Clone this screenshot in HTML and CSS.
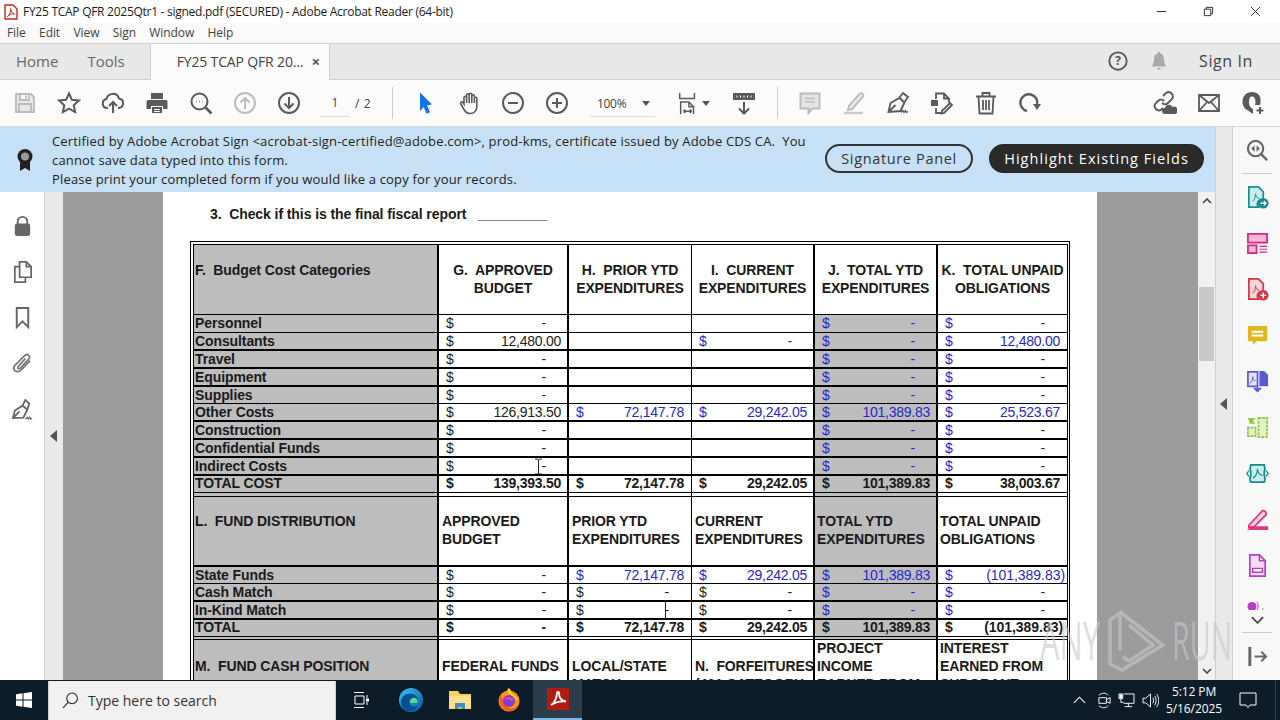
FILE: index.html
```html
<!DOCTYPE html>
<html lang="en">
<head>
<meta charset="utf-8">
<title>FY25 TCAP QFR 2025Qtr1 - signed.pdf</title>
<link rel="stylesheet" href="styles.css">
</head>
<body>
<div class="app">
  <header class="titlebar">
    <svg class="ti" viewBox="0 0 14 16"><path d="M1 1h8l4 4v10H1z" fill="#fff" stroke="#c8281e" stroke-width="1.4"/><path d="M3.5 12.5c2-1 3.500-5 3-8 .5 3 2 5 4 5.500-3 -.5-5 .5-7 2.500z" fill="none" stroke="#c8281e" stroke-width="1"/></svg>
    <span class="ttext">FY25 TCAP QFR 2025Qtr1 - signed.pdf (SECURED) - Adobe Acrobat Reader (64-bit)</span>
    <div class="winbtns">
      <svg viewBox="0 0 12 12"><path d="M1 6h10" stroke="#222" stroke-width="1"/></svg>
      <svg viewBox="0 0 12 12"><path d="M1.500 3.500h7v7h-7zM3.500 3.500v-2h7v7h-2" fill="none" stroke="#222" stroke-width="1"/></svg>
      <svg viewBox="0 0 12 12"><path d="M1 1l10 10M11 1L1 11" stroke="#222" stroke-width="1"/></svg>
    </div>
  </header>
  <nav class="menubar">
    <span>File</span><span>Edit</span><span>View</span><span>Sign</span><span>Window</span><span>Help</span>
  </nav>
  <div class="tabbar">
    <span class="tablink">Home</span>
    <span class="tablink tools">Tools</span>
    <div class="tab"><span>FY25 TCAP QFR 20...</span><b>×</b></div>
    <div class="tabright">
      <svg class="i22" viewBox="0 0 24 24"><circle cx="12" cy="12" r="9.500" fill="none" stroke="#555" stroke-width="2"/><text x="12" y="16.500" class="qm">?</text></svg>
      <svg class="i22 bell" viewBox="0 0 24 24"><path d="M12 2c1 0 1.500 .8 1.500 1.600 3 1 4 3.500 4 6.400 0 4 1 6 2.500 8H4c1.500-2 2.500-4 2.500-8 0-2.900 1-5.400 4-6.400C10.500 2.800 11 2 12 2zM10 19.500h4a2 2 0 0 1-4 0z" fill="#aaa"/></svg>
      <span class="signin">Sign In</span>
    </div>
  </div>
  <div class="toolbar">
    <button class="tb"><svg viewBox="0 0 24 24" class="off"><path d="M3 3h15l3 3v15H3zM7 3v6h9V3M6 21v-8h12v8M13 4.500v3" fill="#e8e8e8" stroke="#bbb" stroke-width="1.800"/></svg></button>
    <button class="tb"><svg viewBox="0 0 24 24"><path d="M12 2.500l2.900 6.300 6.900.8-5.100 4.700 1.400 6.800-6.100-3.400-6.100 3.400 1.400-6.800-5.100-4.700 6.900-.8z"/></svg></button>
    <button class="tb"><svg viewBox="0 0 24 24"><path d="M7 17H6a4.500 4.500 0 0 1-.6-8.900A6.500 6.500 0 0 1 18 7.500a4.800 4.800 0 0 1 0 9.500h-1M12 22V11M8 15l4-4 4 4"/></svg></button>
    <button class="tb"><svg viewBox="0 0 24 24"><path class="fill" d="M6 2h12v6H6zM3 9h18a1.500 1.500 0 0 1 1.500 1.500V18H18v-3H6v3H1.500v-7.500A1.500 1.500 0 0 1 3 9zM7 16h10v6H7z"/><path d="M9 18.500h6M9 20.500h6" stroke="#fff" stroke-width="1"/></svg></button>
    <button class="tb"><svg viewBox="0 0 24 24"><circle cx="10.500" cy="10.500" r="8"/><path d="M16.500 16.500l6 6" stroke-width="2.600"/><path d="M7 10.500h.5M10.300 10.500h.5M13.600 10.500h.5" stroke-width="1.800"/></svg></button>
    <button class="tb"><svg viewBox="0 0 24 24" class="off"><circle cx="12" cy="12" r="10"/><path d="M12 18V7M7.500 11.500L12 7l4.500 4.500"/></svg></button>
    <button class="tb"><svg viewBox="0 0 24 24"><circle cx="12" cy="12" r="10"/><path d="M12 6v11M7.500 12.500L12 17l4.500-4.500"/></svg></button>
    <div class="pager"><span class="pnum">1</span><span class="ptotal">/ 2</span></div>
    <button class="tb"><svg viewBox="0 0 24 24"><path d="M7 1.500l12 12-5 .8 3 7-3.500 1.500-2.800-6.800L7 20z" fill="#1473e6" stroke="none"/></svg></button>
    <button class="tb"><svg viewBox="0 0 24 24"><path d="M7 13V6.500a1.300 1.300 0 0 1 2.600 0V4a1.300 1.300 0 0 1 2.600 0v-.5a1.300 1.300 0 0 1 2.600 0V5a1.300 1.300 0 0 1 2.600 0v2a1.300 1.300 0 0 1 2.400 0v9c0 4-3 6.500-6.500 6.500-3 0-4.500-1-6-3.500l-3.500-6c-.8-1.500 1-2.800 2.200-1.500zM9.600 6.500V12M12.200 4v8M14.800 4v8M17.400 6v6" stroke-width="1.600"/></svg></button>
    <button class="tb"><svg viewBox="0 0 24 24"><circle cx="12" cy="12" r="10"/><path d="M7 12h10"/></svg></button>
    <button class="tb"><svg viewBox="0 0 24 24"><circle cx="12" cy="12" r="10"/><path d="M7 12h10M12 7v10"/></svg></button>
    <div class="zoomsel"><span>100%</span><i class="caret"></i></div>
    <button class="tb fitb"><svg viewBox="0 0 24 24"><path d="M3 1v6h16V1M4 24V11h9l5 5v8M13 11v5h5M7 21h9M7 21l2-2M7 21l2 2M16 21l-2-2M16 21l-2 2" stroke-width="1.600"/></svg><i class="caret"></i></button>
    <button class="tb readb"><svg viewBox="0 0 24 24"><path class="fill" d="M1 2h22v7H1z"/><path d="M4.500 5.500h1M8 5.500h1M11.500 5.500h1M15 5.500h1M18.500 5.500h1" stroke="#fff" stroke-width="2"/><path d="M12 11v11M7 17.500l5 5 5-5" stroke-width="2"/></svg></button>
    <span class="tsep"></span>
    <button class="tb"><svg viewBox="0 0 24 24" class="off"><path d="M2.500 2.500h19v15h-7l-4 4.500v-4.500h-8z" fill="#e4e4e4"/><path d="M7 7.500h10M7 11h10"  stroke-width="1.500"/></svg></button>
    <button class="tb"><svg viewBox="0 0 24 24" class="off"><path d="M7 15L18 2.500c2-1 4 1 3 3L10 18l-4 1z" fill="#f0f0f0"/><path d="M2 22h19" stroke-width="2.500" stroke="#ccc"/></svg></button>
    <button class="tb"><svg viewBox="0 0 24 24"><path d="M2.500 21l2-9 9-5 5 4.500-4 8.500zM2.500 21l7-7M13 7l4-5 5 4-3.500 5" stroke-width="1.900"/><path d="M15 21.500l2-2 1 2 1.500-2 1 2 1.500-1" stroke-width="1.200"/></svg></button>
    <button class="tb"><svg viewBox="0 0 24 24"><path d="M6 8V2.500h8l5 5V12M14 2.500v5h5M6 17v5h5M14 22l8-8-2-2-8 8-.5 2.500z" stroke-width="1.800"/><path class="fill" d="M1 9h7v6H1z"/></svg></button>
    <button class="tb"><svg viewBox="0 0 24 24"><path d="M2 5.500h20M8.500 5.500V2h7v3.500M4.500 5.500l1 17h13l1-17M9 9v10M12 9v10M15 9v10" stroke-width="1.800"/></svg></button>
    <button class="tb"><svg viewBox="0 0 24 24"><path d="M9 20A8.500 8.500 0 1 1 19 14" stroke-width="2.400"/><path class="fill" d="M15 13h8l-4 6z"/></svg></button>
    <span class="tspace"></span>
    <button class="tb"><svg viewBox="0 0 24 24"><path d="M10 5l3-3a4.300 4.300 0 0 1 6 6l-4 4a4.300 4.300 0 0 1-6 0M11 10a4.300 4.300 0 0 0-6 0l-2.500 2.500a4.300 4.300 0 0 0 6 6l1.500-1.500" stroke-width="1.900"/><path class="fill" d="M12 23a3 3 0 0 1 0-6 4 4 0 0 1 7.500-1 3.500 3.500 0 0 1 3 7z"/></svg></button>
    <button class="tb"><svg viewBox="0 0 24 24"><path d="M2 4h20v16H2zM2 4l10 8 10-8M2 20l8-9M22 20l-8-9" stroke-width="1.800"/></svg></button>
    <button class="tb"><svg viewBox="0 0 24 24"><path class="fill" d="M11 1C5.500 1 1.500 5 1.500 10.500c0 4 2 7.500 5.500 9l5 3.500v-5c-2.500-1-4-3.500-4-7 0-3.500 1-5.500 3-5.500s3.500 2 3.500 5.500c0 1-.2 2-.5 3h5c.4-1 .5-2 .5-3.500C20.500 5 16.500 1 11 1z"/><path d="M19 16v7M15.500 19.500h7" stroke-width="2"/></svg></button>
  </div>

  <div class="workspace">
    <div class="docside">
      <section class="infobar">
        <svg class="ribbon" viewBox="0 0 18 24"><circle cx="9" cy="8.500" r="7.500" fill="#222"/><circle cx="9" cy="8.500" r="4" fill="#999"/><path d="M4 14v9l5-3 5 3v-9z" fill="#222"/></svg>
        <p class="infotext">Certified by Adobe Acrobat Sign &lt;acrobat-sign-certified@adobe.com&gt;, prod-kms, certificate issued by Adobe CDS CA.&nbsp; You<br>cannot save data typed into this form.<br>Please print your completed form if you would like a copy for your records.</p>
        <span class="pill">Signature Panel</span>
        <span class="pill dark">Highlight Existing Fields</span>
      </section>
      <div class="docrow">
        <aside class="leftrail">
          <svg viewBox="0 0 24 24"><path d="M7 11V8a5 5 0 0 1 10 0v3" fill="none" stroke="#666" stroke-width="2"/><rect x="4" y="10" width="16" height="13" rx="2.500" fill="#666"/></svg>
          <svg viewBox="0 0 24 24"><path d="M9 18V2h7l5 5v11zM16 2v5h5M9 7H4v16h11v-5" fill="none" stroke="#666" stroke-width="1.800"/></svg>
          <svg viewBox="0 0 24 24"><path d="M6 2h12v20l-6-6-6 6z" fill="none" stroke="#666" stroke-width="2"/></svg>
          <svg viewBox="0 0 24 24"><path d="M20 9l-9.500 10c-2 2-5 2-6.500 .5s-1.500-4 .5-6L14 4c1.500-1.500 3.500-1.500 4.500-.5s1 3-.5 4.500l-8 8.500c-1 1-2 1-2.500 .5s-.5-1.500 .5-2.500l7-7.500" fill="none" stroke="#777" stroke-width="1.800"/></svg>
          <svg viewBox="0 0 24 24"><path d="M2 21l2-8 8-5 5 4-4 8.500zM2 21l7-7M12 8l3-6 4 4-2 6" fill="none" stroke="#666" stroke-width="1.900"/><path d="M15 22l2-2 1 2 1.500-2 1 2 1.500-1" fill="none" stroke="#666" stroke-width="1.200"/></svg>
        </aside>
        <div class="strip"><i class="arrowl"></i></div>
        <main class="canvas">
          <article class="page">
            <p class="finalq">3.&nbsp; Check if this is the final fiscal report &nbsp; _________</p>
            <div class="sheet">
              <div class="inner">
                <div class="row h70 b1 bold">
                  <div class="c f top16">F.&nbsp; Budget Cost Categories</div>
                  <div class="c g top16 center">G.&nbsp; APPROVED<br>BUDGET</div>
                  <div class="c h top16 center">H.&nbsp; PRIOR YTD<br>EXPENDITURES</div>
                  <div class="c i top16 center">I.&nbsp; CURRENT<br>EXPENDITURES</div>
                  <div class="c j nogrey top16 center">J.&nbsp; TOTAL YTD<br>EXPENDITURES</div>
                  <div class="c k top16 center">K.&nbsp; TOTAL UNPAID<br>OBLIGATIONS</div>
                </div>
                <div class="row h18 b1">
                  <div class="c f bold">Personnel</div>
                  <div class="c g m"><span>$</span><span class="d">-</span></div>
                  <div class="c h m"></div><div class="c i m"></div>
                  <div class="c j m blue"><span>$</span><span class="d">-</span></div>
                  <div class="c k m blue"><span>$</span><span class="d">-</span></div>
                </div>
                <div class="row h18 b2">
                  <div class="c f bold">Consultants</div>
                  <div class="c g m"><span>$</span><span>12,480.00</span></div>
                  <div class="c h m"></div>
                  <div class="c i m blue"><span>$</span><span class="d">-</span></div>
                  <div class="c j m blue"><span>$</span><span class="d">-</span></div>
                  <div class="c k m blue"><span>$</span><span>12,480.00</span></div>
                </div>
                <div class="row h18 b2">
                  <div class="c f bold">Travel</div>
                  <div class="c g m"><span>$</span><span class="d">-</span></div>
                  <div class="c h m"></div><div class="c i m"></div>
                  <div class="c j m blue"><span>$</span><span class="d">-</span></div>
                  <div class="c k m blue"><span>$</span><span class="d">-</span></div>
                </div>
                <div class="row h18 b2">
                  <div class="c f bold">Equipment</div>
                  <div class="c g m"><span>$</span><span class="d">-</span></div>
                  <div class="c h m"></div><div class="c i m"></div>
                  <div class="c j m blue"><span>$</span><span class="d">-</span></div>
                  <div class="c k m blue"><span>$</span><span class="d">-</span></div>
                </div>
                <div class="row h17 b1">
                  <div class="c f bold">Supplies</div>
                  <div class="c g m"><span>$</span><span class="d">-</span></div>
                  <div class="c h m"></div><div class="c i m"></div>
                  <div class="c j m blue"><span>$</span><span class="d">-</span></div>
                  <div class="c k m blue"><span>$</span><span class="d">-</span></div>
                </div>
                <div class="row h18 b2">
                  <div class="c f bold">Other Costs</div>
                  <div class="c g m"><span>$</span><span>126,913.50</span></div>
                  <div class="c h m blue"><span>$</span><span>72,147.78</span></div>
                  <div class="c i m blue"><span>$</span><span>29,242.05</span></div>
                  <div class="c j m blue"><span>$</span><span>101,389.83</span></div>
                  <div class="c k m blue"><span>$</span><span>25,523.67</span></div>
                </div>
                <div class="row h18 b2">
                  <div class="c f bold">Construction</div>
                  <div class="c g m"><span>$</span><span class="d">-</span></div>
                  <div class="c h m"></div><div class="c i m"></div>
                  <div class="c j m blue"><span>$</span><span class="d">-</span></div>
                  <div class="c k m blue"><span>$</span><span class="d">-</span></div>
                </div>
                <div class="row h18 b2">
                  <div class="c f bold">Confidential Funds</div>
                  <div class="c g m"><span>$</span><span class="d">-</span></div>
                  <div class="c h m"></div><div class="c i m"></div>
                  <div class="c j m blue"><span>$</span><span class="d">-</span></div>
                  <div class="c k m blue"><span>$</span><span class="d">-</span></div>
                </div>
                <div class="row h18 b2">
                  <div class="c f bold">Indirect Costs</div>
                  <div class="c g m beam"><span>$</span><span class="d">-</span>
                    <svg class="ibeam" viewBox="0 0 9 17"><path d="M1 1h2.500L4.500 2l1-1H8M4.500 2v13M1 16h2.500l1-1 1 1H8" fill="none" stroke="#222" stroke-width="1"/></svg>
                  </div>
                  <div class="c h m"></div><div class="c i m"></div>
                  <div class="c j m blue"><span>$</span><span class="d">-</span></div>
                  <div class="c k m blue"><span>$</span><span class="d">-</span></div>
                </div>
                <div class="row h17 b1 bold total">
                  <div class="c f">TOTAL COST</div>
                  <div class="c g m"><span>$</span><span>139,393.50</span></div>
                  <div class="c h m"><span>$</span><span>72,147.78</span></div>
                  <div class="c i m"><span>$</span><span>29,242.05</span></div>
                  <div class="c j m"><span>$</span><span>101,389.83</span></div>
                  <div class="c k m"><span>$</span><span>38,003.67</span></div>
                </div>
                <div class="row h4 b1">
                  <div class="c f"></div><div class="c g"></div><div class="c h"></div><div class="c i"></div><div class="c j"></div><div class="c k"></div>
                </div>
                <div class="row h70 b2 bold">
                  <div class="c f top15">L.&nbsp; FUND DISTRIBUTION</div>
                  <div class="c g top15 lt">APPROVED<br>BUDGET</div>
                  <div class="c h top15 lt">PRIOR YTD<br>EXPENDITURES</div>
                  <div class="c i top15 lt">CURRENT<br>EXPENDITURES</div>
                  <div class="c j top15 lt">TOTAL YTD<br>EXPENDITURES</div>
                  <div class="c k top15 lt">TOTAL UNPAID<br>OBLIGATIONS</div>
                </div>
                <div class="row h17 b1">
                  <div class="c f bold">State Funds</div>
                  <div class="c g m"><span>$</span><span class="d">-</span></div>
                  <div class="c h m blue"><span>$</span><span>72,147.78</span></div>
                  <div class="c i m blue"><span>$</span><span>29,242.05</span></div>
                  <div class="c j m blue"><span>$</span><span>101,389.83</span></div>
                  <div class="c k m blue neg"><span>$</span><span>(101,389.83)</span></div>
                </div>
                <div class="row h18 b2">
                  <div class="c f bold">Cash Match</div>
                  <div class="c g m"><span>$</span><span class="d">-</span></div>
                  <div class="c h m"><span>$</span><span class="d">-</span></div>
                  <div class="c i m"><span>$</span><span class="d">-</span></div>
                  <div class="c j m blue"><span>$</span><span class="d">-</span></div>
                  <div class="c k m blue"><span>$</span><span class="d">-</span></div>
                </div>
                <div class="row h18 b2">
                  <div class="c f bold">In-Kind Match</div>
                  <div class="c g m"><span>$</span><span class="d">-</span></div>
                  <div class="c h m caretcell"><span>$</span><span class="d">-</span></div>
                  <div class="c i m"><span>$</span><span class="d">-</span></div>
                  <div class="c j m blue"><span>$</span><span class="d">-</span></div>
                  <div class="c k m blue"><span>$</span><span class="d">-</span></div>
                </div>
                <div class="row h17 b1 bold total">
                  <div class="c f">TOTAL</div>
                  <div class="c g m"><span>$</span><span class="d">-</span></div>
                  <div class="c h m"><span>$</span><span>72,147.78</span></div>
                  <div class="c i m"><span>$</span><span>29,242.05</span></div>
                  <div class="c j m"><span>$</span><span>101,389.83</span></div>
                  <div class="c k m neg"><span>$</span><span>(101,389.83)</span></div>
                </div>
                <div class="row h3 b1">
                  <div class="c f"></div><div class="c g"></div><div class="c h"></div><div class="c i"></div><div class="c j"></div><div class="c k"></div>
                </div>
                <div class="row h70 b1 bold">
                  <div class="c f top17">M.&nbsp; FUND CASH POSITION</div>
                  <div class="c g top17 lt">FEDERAL FUNDS</div>
                  <div class="c h top17 lt">LOCAL/STATE<br>MATCH</div>
                  <div class="c i top17 lt">N.&nbsp; FORFEITURES<br>(401 CATEGORY</div>
                  <div class="c j nogrey lt up1">PROJECT<br>INCOME<br>EARNED FROM</div>
                  <div class="c k lt up1">INTEREST<br>EARNED FROM<br>SUBGRANT</div>
                </div>
              </div>
            </div>
          </article>
        </main>
        <div class="vscroll">
          <svg class="sarrow" viewBox="0 0 10 6"><path d="M1 5l4-4 4 4" fill="none" stroke="#444" stroke-width="1.600"/></svg>
          <div class="thumb"></div>
          <svg class="sarrow" viewBox="0 0 10 6"><path d="M1 1l4 4 4-4" fill="none" stroke="#444" stroke-width="1.600"/></svg>
        </div>
      </div>
    </div>
    <div class="strip rstrip"><i class="arrowl"></i></div>
    <aside class="rightrail">
      <svg class="ri" viewBox="0 0 24 24"><circle cx="10" cy="10" r="8" fill="none" stroke="#666" stroke-width="2.200"/><path d="M16 16l6 6" stroke="#666" stroke-width="2.600"/><path d="M9 6.500L5.500 10 9 13.500zM11 6.500l3.500 3.500-3.500 3.500z" fill="#666"/></svg>
      <hr class="rsep">
      <svg class="ri" viewBox="0 0 24 24"><path d="M3 1h10l5 5v8a5 5 0 0 0-5 8H3z" fill="#c8eeee" stroke="#1a8f8f" stroke-width="1.800"/><path d="M7 16c2-2 3-5 3-8 0 3 2 5 4 5" fill="none" stroke="#1a8f8f" stroke-width="1"/><circle cx="18" cy="18" r="5.500" fill="#14888c"/><path d="M15 18h6M18.500 15.500L21 18l-2.500 2.500" fill="none" stroke="#fff" stroke-width="1.400"/></svg>
      <svg class="ri" viewBox="0 0 24 24"><path d="M2 2h20v9H2z" fill="#f4b7d4" stroke="#d1297f" stroke-width="1.800"/><path d="M2 14h9v8H2z" fill="#f4b7d4" stroke="#d1297f" stroke-width="1.800"/><path d="M14 15h8M14 18h8M14 21h8" stroke="#d1297f" stroke-width="1.200"/></svg>
      <svg class="ri" viewBox="0 0 24 24"><path d="M3 1h10l5 5v8a5 5 0 0 0-5 8H3z" fill="#fbd7d7" stroke="#d8344a" stroke-width="1.800"/><path d="M7 16c2-2 3-5 3-8 0 3 2 5 4 5" fill="none" stroke="#d8344a" stroke-width="1"/><circle cx="18" cy="18" r="5.500" fill="#dc2f45"/><path d="M15 18h6M18 15v6" stroke="#fff" stroke-width="1.600"/></svg>
      <svg class="ri" viewBox="0 0 24 24"><path d="M2 2h20v16H11l-4 4v-4H2z" fill="#e0b81e"/><path d="M6 8h12M6 12h12" stroke="#fff" stroke-width="2"/></svg>
      <svg class="ri" viewBox="0 0 24 24"><path d="M2 2h10v15H2z" fill="#e4e4fb" stroke="#5b5bd6" stroke-width="1.800"/><path d="M14 1h5l4 4v12h-9z" fill="#5b5bd6"/><path d="M4 14c2-1 3-4 3-7 0 3 1 4 3 4" fill="none" stroke="#5b5bd6" stroke-width="1"/><path d="M12 17v3M8 19h8l-4 4z" fill="#5b5bd6" stroke="#5b5bd6"/></svg>
      <svg class="ri" viewBox="0 0 24 24"><path d="M13 2h9v20h-9zM2 12v9h8v-9z" fill="#e3f2c5" stroke="#8dc63f" stroke-width="1.800" stroke-dasharray="3 1"/><path d="M2 2h8l-3 3 3 3H4z" fill="#8dc63f"/></svg>
      <svg class="ri" viewBox="0 0 24 24"><path d="M5 3h14c1 3 1 5 0 7v4c1 2 1 5 0 7H5c-1-2-1-5 0-7v-4c-1-2-1-4 0-7z" fill="#c8eeee" stroke="#14888c" stroke-width="1.800"/><path d="M7 17c3-2 5-6 5-10 0 4 2 6 5 7" fill="none" stroke="#14888c" stroke-width="1.200"/><path d="M3 9L1 12l2 3M21 9l2 3-2 3" fill="none" stroke="#14888c" stroke-width="1.400"/></svg>
      <svg class="ri" viewBox="0 0 24 24"><path d="M3 18L17 3c2-1 5 2 4 4L8 20H3z" fill="#fbd3e2" stroke="#e0367e" stroke-width="1.800"/><path d="M1 23l4-4h18v4z" fill="#e0367e"/></svg>
      <svg class="ri" viewBox="0 0 24 24"><path d="M4 1h10l6 6v16H4z" fill="#f6ddf6" stroke="#b83fc4" stroke-width="1.800"/><path d="M14 1v6h6" fill="none" stroke="#b83fc4" stroke-width="1.600"/><path d="M7 15h10v4H7z" fill="#fff" stroke="#b83fc4" stroke-width="1.500"/></svg>
      <div class="moredots"><svg viewBox="0 0 18 8"><circle cx="5" cy="4.500" r="4.500" fill="#b83fc4"/><path d="M10 0c1.500 2 1.500 6 0 8M15 7h1.500" fill="none" stroke="#b83fc4" stroke-width="1"/></svg></div>
      <svg class="chev" viewBox="0 0 14 8"><path d="M1 1l6 6 6-6" fill="none" stroke="#444" stroke-width="1.800"/></svg>
      <hr class="rsep low">
      <svg class="ri last" viewBox="0 0 24 24"><path d="M4 2v20" stroke="#666" stroke-width="3"/><path d="M9 12h12M16 7l5 5-5 5" fill="none" stroke="#666" stroke-width="2"/></svg>
    </aside>
  </div>

  <footer class="taskbar">
    <button class="startbtn"><svg viewBox="0 0 16 16"><path d="M0 2.200l6.500-.9v6.300H0zM7.500 1.200L16 0v7.600H7.500zM0 8.500h6.500v6.200L0 13.800zM7.500 8.500H16V16l-8.500-1.200z" fill="#fff"/></svg></button>
    <div class="search">
      <svg viewBox="0 0 16 16"><circle cx="9.500" cy="6" r="5" fill="none" stroke="#222" stroke-width="1"/><path d="M6 9.500L1 15" stroke="#222" stroke-width="1"/></svg>
      <span>Type here to search</span>
    </div>
    <button class="tk tkfirst"><svg class="tv" viewBox="0 0 16 16"><path d="M1 .5h10M2 4h9v8H2zM1 15.500h10M14 3v3M14 10v3" fill="none" stroke="#fff" stroke-width="1"/><rect x="13" y="6.500" width="3" height="3" fill="#fff"/></svg></button>
    <button class="tk"><svg viewBox="0 0 24 24"><defs><linearGradient id="eg" x1="0" y1="0" x2="1" y2="1"><stop offset="0" stop-color="#35c1f1"/><stop offset="1" stop-color="#0c59a4"/></linearGradient></defs><circle cx="12" cy="12" r="12" fill="url(#eg)"/><path d="M2 16C1 8 8 5 13 6c5 1 7 5 5.500 9H11c-.5 3 4 5 8 3-3 5-8 6-11 5-3-1-5-4-6-7z" fill="#0a4f96"/><path d="M11 15c-1-4 3-7 7-4 .7 1 .7 3 .5 4z" fill="#58d68d"/></svg></button>
    <button class="tk"><svg viewBox="0 0 24 24"><path d="M1 3h9l2 3h11v15H1z" fill="#f7cf5d"/><path d="M1 8h22v13H1z" fill="#ffe08a"/><path d="M7 15h10v6H7z" fill="#3a8fd0"/><path d="M10 19h4v2h-4z" fill="#e8b93c"/></svg></button>
    <button class="tk"><svg viewBox="0 0 24 24"><circle cx="12" cy="13" r="10.500" fill="#ff9500"/><path d="M12 0c3 3 2 5 5 7 3 2 4 4 4 6L12 6C10 5 9 2 12 0z" fill="#ffcb2e"/><path d="M3 8c-2 6 1 14 9 15 5 0 9-3 10-8-2 5-7 6-10 5-3-1-5-4-4-7z" fill="#ff5722"/><circle cx="12" cy="13" r="6" fill="#7b3fd6"/><path d="M7 11c3-2 8-2 10 1-2 1-3 1-4 0s-4-1-6-1z" fill="#e24fa8"/></svg></button>
    <button class="tk active"><svg viewBox="0 0 24 24"><rect x="1" y="1" width="22" height="22" fill="#b01c12"/><path d="M5 18c3-1.500 6-7 6-12 0-1.500 2-1.500 2 0 0 5 3 8 7 8.500-5-.5-11 1-15 3.500z" fill="none" stroke="#fff" stroke-width="1.800"/></svg></button>
    <div class="tray">
      <svg class="tr1" viewBox="0 0 14 8"><path d="M1 7l6-6 6 6" fill="none" stroke="#fff" stroke-width="1.100"/></svg>
      <svg class="tr2" viewBox="0 0 16 18"><path d="M2 3.500c3-3 8-3 10 0M2 14.500c3 3 8 3 10 0M2 6h8v6H2zM10 8l4-2v6l-4-2" fill="none" stroke="#fff" stroke-width="1"/></svg>
      <svg class="tr3" viewBox="0 0 18 16"><path d="M6 1h11v10H6M1 1h4v5H1zM11 11v3M7 14.500h8M3 6v4h3" fill="none" stroke="#fff" stroke-width="1"/><rect x="1.500" y="1.500" width="3" height="4" fill="#fff"/></svg>
      <svg class="tr4" viewBox="0 0 18 16"><path d="M1 5.500h3L9 1v14l-5-4.500H1zM11.500 5c1 2 1 4 0 6M13.500 3c2 3 2 7 0 10M15.500 1c3 4 3 10 0 14" fill="none" stroke="#fff" stroke-width="1"/></svg>
      <div class="clock"><span>5:12 PM</span><span>5/16/2025</span></div>
      <svg class="notif" viewBox="0 0 18 18"><path d="M1 2h16v12h-6l-2 2.500L7 14H1z" fill="none" stroke="#fff" stroke-width="1"/></svg>
      <span class="showdesk"></span>
    </div>
  </footer>

  <svg class="watermark" viewBox="0 0 200 70">
    <text x="7" y="56" class="wm" textLength="60" lengthAdjust="spacingAndGlyphs">ANY</text>
    <path class="wmg" d="M87 8L130 41L89 66L77 60V16L87 9V46M96 21L120 41L96 57L90 53"/>
    <text x="139" y="56" class="wm" textLength="60" lengthAdjust="spacingAndGlyphs">RUN</text>
  </svg>
</div>
</body>
</html>
```
FILE: styles.css
```css
* { box-sizing: border-box; }
html, body { margin: 0; padding: 0; }
body { width: 1280px; height: 720px; overflow: hidden; font-family: "Open Sans", "Noto Sans", sans-serif; background: #fff; color: #222; }
.app { position: relative; width: 1280px; height: 720px; display: flex; flex-direction: column; overflow: hidden; }
button { border: 0; padding: 0; background: none; font: inherit; color: inherit; }

.titlebar { height: 23px; flex: none; background: #fff; display: flex; align-items: center; padding-left: 4px; font-size: 12px; color: #1a1a1a; }
.ti { width: 14px; height: 16px; margin-right: 5px; }
.ttext { white-space: nowrap; letter-spacing: -.27px; }
.winbtns { margin-left: auto; display: flex; gap: 36px; padding-right: 19px; }
.winbtns svg { width: 11px; height: 11px; }

.menubar { height: 21px; flex: none; background: #f9f9f9; border-bottom: 1px solid #cfcfcf; display: flex; align-items: center; padding: 0 0 2px 7px; gap: 13.400px; font-size: 12px; color: #444; letter-spacing: -.08px; }

.tabbar { height: 36px; flex: none; background: #e8e8e8; border-bottom: 1px solid #d0d0d0; display: flex; align-items: stretch; font-size: 15px; color: #666; }
.tablink { margin-left: 16px; line-height: 34px; }
.tablink.tools { margin-left: 29px; }
.tab { margin-left: 25px; width: 180px; background: #fbfbfb; border-left: 1px solid #d0d0d0; border-right: 1px solid #d0d0d0; margin-bottom: -1px; display: flex; align-items: center; padding: 0 0 2px 26px; font-size: 14px; color: #444; }
.tab span { letter-spacing: -.15px; }
.tab b { margin-left: 8px; font-size: 15px; color: #555; }
.tabright { margin-left: auto; display: flex; align-items: center; padding: 0 27px 1px 0; }
.i22 { width: 22px; height: 22px; }
.bell { margin-left: 19px; }
.qm { font-family: "Open Sans", sans-serif; font-size: 13px; font-weight: 700; text-anchor: middle; fill: #555; }
.signin { margin-left: 29px; font-size: 16px; color: #444; letter-spacing: .6px; }

.toolbar { height: 47px; flex: none; background: #fbfbfb; border-bottom: 1px solid #d8d8d8; display: flex; align-items: center; padding: 0 5px 0 3px; }
.tb { width: 44px; height: 30px; flex: none; display: flex; align-items: center; justify-content: center; }
.tb svg { width: 24px; height: 24px; fill: none; stroke: #5a5a5a; stroke-width: 2; }
.tb svg .fill { fill: #5a5a5a; stroke: none; }
.tb svg.off { stroke: #bdbdbd; }
.pager { width: 92px; height: 32px; flex: none; display: flex; align-items: center; position: relative; font-size: 12px; color: #444; }
.pnum { margin-left: 9px; width: 30px; text-align: center; height: 28px; line-height: 28px; border-bottom: 1px solid #ddd; }
.ptotal { margin-left: 5px; letter-spacing: .6px; }
.pager::after { content: ""; position: absolute; left: 81px; top: 0; bottom: 0; width: 1px; background: #ccc; }
.zoomsel { width: 87px; flex: none; height: 28px; display: flex; align-items: center; padding-left: 18px; font-size: 12px; color: #444; letter-spacing: -.3px; position: relative; }
.zoomsel::after { content: ""; position: absolute; left: 11px; width: 65px; bottom: 0; height: 1px; background: #ddd; }
.caret { display: block; width: 0; height: 0; border: 4px solid transparent; border-top: 5px solid #555; border-bottom: 0; }
.zoomsel .caret { margin-left: 16px; }
.fitb { gap: 3px; justify-content: flex-start; padding-left: 11px; }
.fitb svg { width: 22px; height: 24px; flex: none; }
.readb { margin-left: 12px; }
.tsep { width: 1px; height: 32px; background: #ccc; margin: 0 10px 0 11px; flex: none; }
.tspace { flex: 1; }

.workspace { flex: 1; min-height: 0; display: flex; }
.docside { width: 1215px; flex: none; display: flex; flex-direction: column; }
.infobar { height: 65px; flex: none; background: #c6e1f5; display: flex; align-items: center; position: relative; padding-left: 16px; }
.ribbon { width: 18px; height: 24px; flex: none; margin-right: 18px; }
.infotext { margin: 2px 0 0; width: 773px; flex: none; font-size: 13px; line-height: 19px; color: #222; white-space: nowrap; letter-spacing: .17px; }
.pill { height: 29px; margin-top: -2px; border: 2px solid #333; border-radius: 15px; display: flex; align-items: center; justify-content: center; width: 148px; font-size: 14.500px; color: #333; letter-spacing: .65px; flex: none; }
.pill.dark { width: 215px; margin-left: 16px; background: #2a2a2a; color: #fff; border-color: #2a2a2a; letter-spacing: 1.05px; }

.docrow { flex: 1; min-height: 0; display: flex; }
.leftrail { width: 45px; flex: none; background: #fff; border-right: 1px solid #d0d0d0; display: flex; flex-direction: column; align-items: center; gap: 23px; padding: 22px 0 0; }
.leftrail svg { width: 23px; height: 23px; flex: none; }
.strip { width: 18px; flex: none; background: #e9e9e9; position: relative; }
.arrowl { position: absolute; top: 50%; left: 5px; margin-top: -6px; width: 0; height: 0; border: 6px solid transparent; border-right: 7px solid #555; border-left: 0; }
.rstrip { border-left: 1px solid #cfcfcf; border-right: 1px solid #cfcfcf; }
.rstrip .arrowl { left: 4px; top: 271px; margin-top: 0; }
.canvas { flex: 1; min-width: 0; background: #9c9c9c; padding-left: 100px; overflow: hidden; }
.page { width: 934px; min-height: 700px; background: #fff; padding: 13px 0 0 27px; }
.finalq { margin: 0 0 0 20px; font: 700 14px/18px "Liberation Sans", Arial, sans-serif; color: #1a1a1a; white-space: nowrap; letter-spacing: -.08px; }
.sheet { margin-top: 18px; width: 880px; border: 1px solid #000; padding: 2px 1px 0 2px; }
.inner { border: 1px solid #000; border-bottom: 0; font: 14px/18px "Liberation Sans", Arial, sans-serif; color: #222; letter-spacing: -.25px; }
.row { display: grid; grid-template-columns: 245px 130px 123px 123px 123px 129px; border-bottom: 1px solid #000; overflow: hidden; }
.row.b2 { border-bottom-width: 2px; }
.h70 { height: 70px; } .h18 { height: 18px; } .h17 { height: 17px; } .h4 { height: 4px; } .h3 { height: 3px; }
.bold { font-weight: 700; color: #1a1a1a; letter-spacing: -.1px; }
.h18 .c.f, .h17 .c.f { line-height: 17px; }
.c { border-right: 2px solid #000; white-space: nowrap; min-width: 0; }
.c.h { border-right-width: 1px; }
.c.k { border-right: 0; }
.c.f { background: #bdbdbd; padding-left: 1px; }
.c.j { background: #bdbdbd; }
.c.j.nogrey { background: #fff; }
.center { text-align: center; }
.top16 { padding-top: 16px; }
.top15 { padding-top: 15px; }
.top17 { padding-top: 17px; }
.lt { padding-left: 3px; }
.c.j.lt, .c.k.lt { padding-left: 2px; }
.up1 { margin-top: -1px; }
.m { display: flex; justify-content: space-between; padding: 0 6px 0 7px; line-height: 17px; letter-spacing: -.25px; }
.c.h.m { padding-right: 7px; }
.c.k.m { padding-right: 7px; }
.total .c.m, .total .c.f { line-height: 15px; }
.blue { color: #2727d0; }
.d { margin-right: 15px; }
.k .d { color: #333; }
.c.k.neg { padding-right: 2px; letter-spacing: -.05px; }
.total .c.k.neg { padding-right: 4px; }
.beam { position: relative; }
.ibeam { position: absolute; left: 95px; top: 0; width: 9px; height: 17px; }
.caretcell { position: relative; }
.caretcell::after { content: ""; position: absolute; left: 96px; top: 0; bottom: 0; width: 1px; background: #222; }

.vscroll { width: 17px; flex: none; background: #f1f1f1; display: flex; flex-direction: column; align-items: center; padding-top: 6px; }
.sarrow { width: 10px; height: 6px; flex: none; }
.thumb { width: 15px; height: 74px; background: #c8c8c8; margin: 83px 0 307px; flex: none; }

.rightrail { flex: 1; background: #f8f8f8; display: flex; flex-direction: column; align-items: center; padding-left: 1px; }
.ri { width: 23px; height: 23px; flex: none; margin-top: 23px; }
.rightrail .ri:first-child { margin-top: 12px; }
.rsep { width: 30px; height: 1px; border: 0; background: #ccc; margin: 11px 0 -11px; flex: none; }
.moredots { height: 8px; margin-top: 25px; flex: none; width: 20px; }
.moredots svg { width: 18px; height: 8px; display: block; }
.chev { width: 13px; height: 8px; margin-top: 6px; flex: none; }
.rsep.low { margin: 8px 0 0; }
.ri.last { margin-top: 12px; }

.taskbar { height: 40px; flex: none; background: #0c1c29; display: flex; align-items: stretch; color: #fff; position: relative; z-index: 2; }
.startbtn { width: 48px; display: flex; align-items: center; justify-content: center; flex: none; }
.startbtn svg { width: 16px; height: 16px; }
.search { width: 288px; flex: none; background: #f1f1f1; margin-top: 1px; display: flex; align-items: center; padding-left: 13px; color: #333; font-size: 14px; border: 1px solid #ccc; border-top: 0; border-bottom: 0; }
.search svg { width: 17px; height: 17px; margin-right: 9px; }
.tk { width: 49px; flex: none; display: flex; align-items: center; justify-content: center; }
.tk svg { width: 24px; height: 24px; }
.tk svg.tv { width: 16px; height: 16px; }
.tkfirst { margin-right: 1px; }
.tk.active { background: #2b3d4b; border-bottom: 2px solid #7db8ea; }
.tray { margin-left: auto; display: flex; align-items: center; color: #fff; height: 100%; }
.tr1 { width: 13px; height: 8px; margin-right: 11px; }
.tr2 { width: 15px; height: 17px; margin-right: 6px; }
.tr3 { width: 17px; height: 15px; margin-right: 7px; }
.tr4 { width: 17px; height: 15px; margin-right: 4px; }
.clock { width: 62px; display: flex; flex-direction: column; align-items: center; font-size: 12px; line-height: 17px; letter-spacing: -.1px; margin-right: 14px; }
.notif { width: 18px; height: 18px; margin-right: 18px; }
.showdesk { width: 1px; height: 100%; background: #33424e; margin-right: 4px; }

.watermark { position: absolute; left: 1033px; top: 604px; width: 200px; height: 70px; z-index: 1; overflow: visible; }
.wm { font-family: "Open Sans", sans-serif; font-weight: 400; font-size: 53px; fill: rgba(200,200,200,.6); }
.wmg { fill: none; stroke: rgba(200,200,200,.6); stroke-width: 3.500; }
```
